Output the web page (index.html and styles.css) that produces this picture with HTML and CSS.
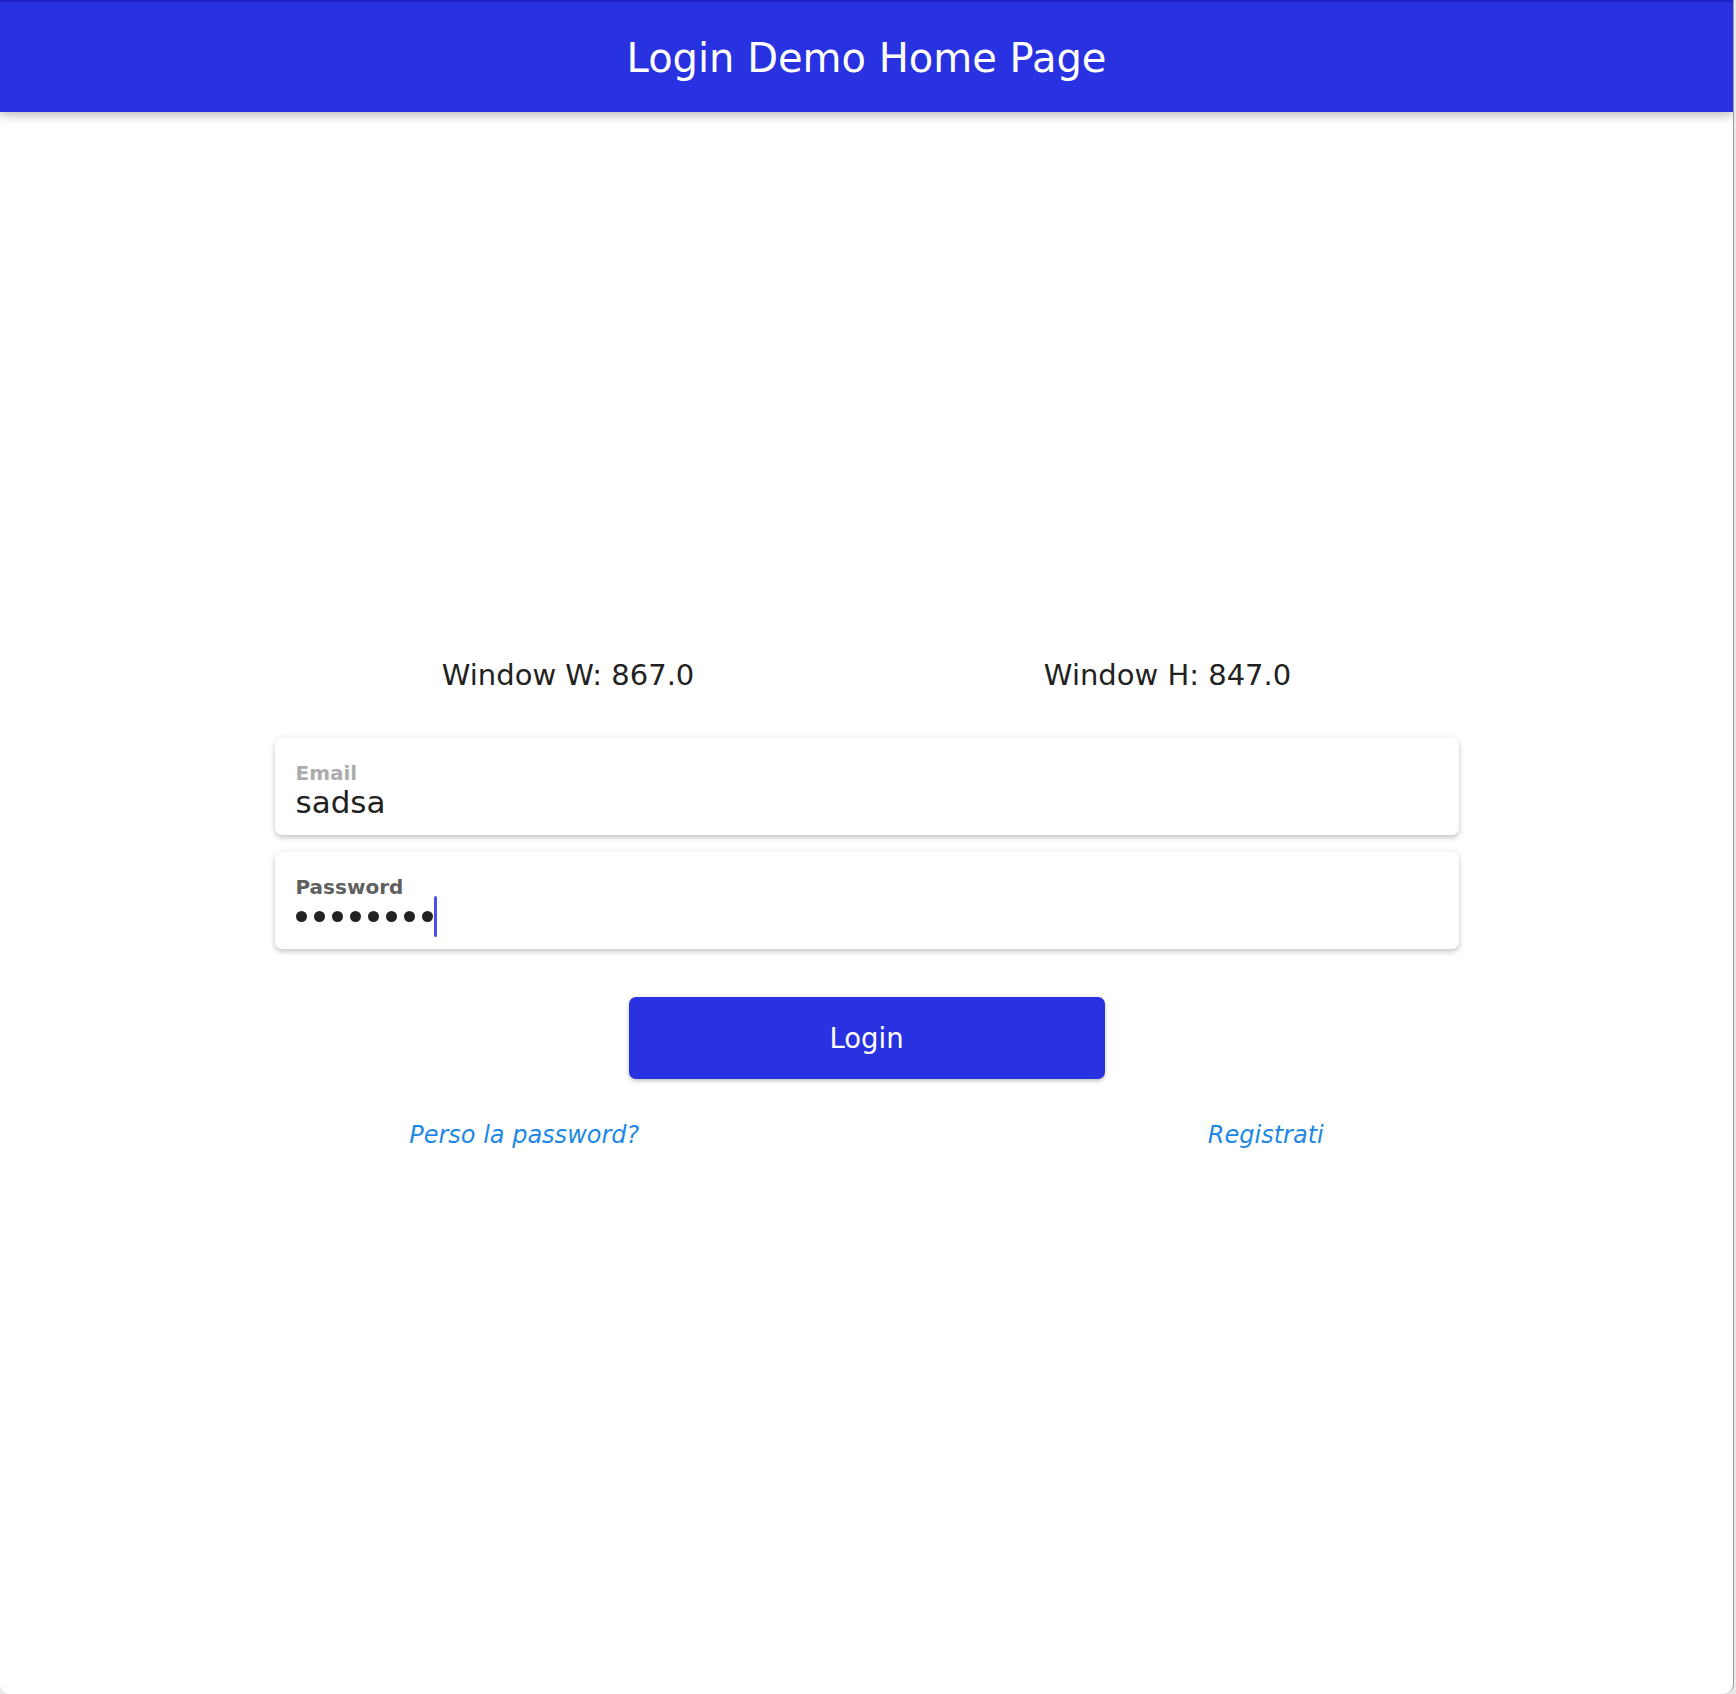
FILE: index.html
```html
<!DOCTYPE html>
<html lang="it">
<head>
<meta charset="utf-8">
<title>Login Demo Home Page</title>
<link rel="stylesheet" href="styles.css">
</head>
<body>
<div class="window">
  <header class="appbar">
    <h1 class="appbar-title">Login Demo Home Page</h1>
  </header>
  <main class="content">
    <div class="size-row">
      <div class="size-cell">Window W: 867.0</div>
      <div class="size-cell">Window H: 847.0</div>
    </div>
    <div class="form">
      <div class="field">
        <div class="field-label">Email</div>
        <div class="field-value">sadsa</div>
      </div>
      <div class="field field-focused">
        <div class="field-label">Password</div>
        <div class="field-value dots" aria-label="password">
          <span class="dot"></span><span class="dot"></span><span class="dot"></span><span class="dot"></span><span class="dot"></span><span class="dot"></span><span class="dot"></span><span class="dot"></span><span class="caret"></span>
        </div>
      </div>
    </div>
    <button class="login-btn" type="button">Login</button>
    <div class="links-row">
      <a class="link" href="#">Perso la password?</a>
      <a class="link" href="#">Registrati</a>
    </div>
  </main>
</div>
</body>
</html>
```
FILE: styles.css
```css
html, body {
  margin: 0;
  padding: 0;
}
body {
  background: #e9e9ec;
  width: 1736px;
  height: 1694px;
  overflow: hidden;
  font-family: "DejaVu Sans", Verdana, sans-serif;
}
.window {
  width: 1733px;
  height: 1694px;
  background: #ffffff;
  border-right: 1px solid #9c9c9c;
  border-radius: 0 0 10px 10px;
  overflow: hidden;
}
.appbar {
  box-sizing: border-box;
  height: 112px;
  background: #2932e0;
  border-top: 2px solid #1c23c9;
  display: flex;
  align-items: center;
  justify-content: center;
  padding-top: 2px;
  box-shadow: 0 3px 10px rgba(0, 0, 0, 0.28);
  position: relative;
  z-index: 1;
}
.appbar-title {
  margin: 0;
  font-weight: normal;
  font-size: 40px;
  color: #ffffff;
}
.content {
  padding-top: 547px;
  display: flex;
  flex-direction: column;
  align-items: center;
}
.size-row {
  width: 1199px;
  display: flex;
  justify-content: space-around;
}
.size-cell {
  font-size: 29px;
  line-height: 33px;
  color: #222222;
}
.form {
  margin-top: 46px;
  width: 1184px;
  display: flex;
  flex-direction: column;
  gap: 17px;
}
.field {
  box-sizing: border-box;
  height: 97px;
  background: #ffffff;
  border-radius: 7px;
  padding: 24px 21px 15px;
  box-shadow: 0 3px 5px rgba(0, 0, 0, 0.18), 0 0 10px rgba(0, 0, 0, 0.07);
}
.field-label {
  font-size: 20px;
  font-weight: bold;
  line-height: 23px;
  color: #acacac;
}
.field-focused .field-label {
  color: #5f5f5f;
}
.field-value {
  font-size: 31px;
  line-height: 35px;
  height: 35px;
  color: #212121;
}
.dots {
  display: flex;
  align-items: center;
  gap: 7px;
}
.dot {
  width: 11px;
  height: 11px;
  border-radius: 50%;
  background: #222222;
  flex: none;
}
.caret {
  width: 3px;
  height: 41px;
  margin-left: -6px;
  border-radius: 2px;
  background: #4a50f0;
  flex: none;
}
.login-btn {
  margin-top: 48px;
  width: 476px;
  height: 82px;
  border: none;
  border-radius: 7px;
  background: #2932e0;
  color: #ffffff;
  font-family: "DejaVu Sans", Verdana, sans-serif;
  font-size: 27.5px;
  box-shadow: 0 2px 4px rgba(0, 0, 0, 0.25);
  cursor: pointer;
}
.links-row {
  margin-top: 42px;
  width: 1483px;
  display: flex;
  justify-content: space-around;
}
.link {
  font-size: 24px;
  line-height: 28px;
  font-style: italic;
  color: #1e88e5;
  text-decoration: none;
}
```
